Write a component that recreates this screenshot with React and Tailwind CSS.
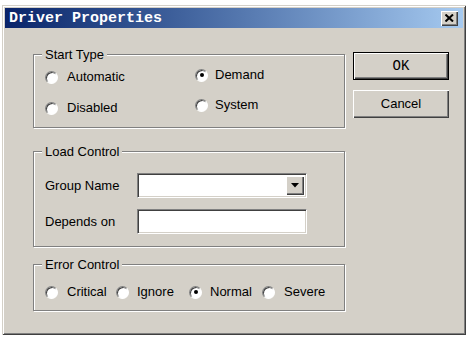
import React, { useState } from "react";

const face = "bg-[#d4d0c8]";

function Radio({ checked, label, onClick, textClass = "ml-[9px]" }) {
  return (
    <button type="button" onClick={onClick} className="flex items-center h-[16px] text-left">
      <span className="relative w-[13px] h-[13px] rounded-full bg-white border border-t-[#808080] border-l-[#808080] border-r-white border-b-white shadow-[inset_1px_1px_0_#404040] flex items-center justify-center">
        {checked && <span className="w-[4px] h-[4px] rounded-full bg-black" />}
      </span>
      <span className={textClass}>{label}</span>
    </button>
  );
}

function GroupBox({ title, className = "", children }) {
  return (
    <div className={`relative border border-[#808080] shadow-[1px_1px_0_#fff,inset_1px_1px_0_#fff] ${className}`}>
      <span className={`absolute left-[8px] -top-[8px] px-[3px] leading-[15px] ${face}`}>{title}</span>
      {children}
    </div>
  );
}

function Button({ children, isDefault }) {
  return (
    <button
      type="button"
      className={`w-[96px] h-[28px] ${face} flex items-center justify-center ${
        isDefault
          ? "border border-black shadow-[inset_1px_1px_0_#fff,inset_-1px_-1px_0_#404040,inset_-2px_-2px_0_#808080]"
          : "shadow-[inset_1px_1px_0_#fff,inset_-1px_-1px_0_#404040,inset_-2px_-2px_0_#808080]"
      }`}
    >
      {children}
    </button>
  );
}

const sunken =
  "bg-white border border-t-[#808080] border-l-[#808080] border-r-white border-b-white shadow-[inset_1px_1px_0_#404040,inset_-1px_-1px_0_#d4d0c8]";

export default function App() {
  const [startType, setStartType] = useState("Demand");
  const [errorCtl, setErrorCtl] = useState("Normal");

  return (
    <div className="w-[471px] h-[338px] bg-white pt-[5px] pl-[2px] font-['Liberation_Sans',Arial,sans-serif] text-[13px] text-black">
      <div className={`w-[464px] h-[330px] ${face} p-[3px] flex flex-col shadow-[inset_1px_1px_0_#d4d0c8,inset_-1px_-1px_0_#404040,inset_2px_2px_0_#fff,inset_-2px_-2px_0_#808080]`}>
        {/* title bar */}
        <div className="h-[20px] flex items-center bg-gradient-to-r from-[#0a246a] to-[#a6caf0]">
          <span className="ml-[4px] text-white font-bold text-[15px] font-['Liberation_Mono',monospace] leading-none">
            Driver Properties
          </span>
          <button
            type="button"
            className={`ml-auto mr-[5px] w-[17px] h-[15px] ${face} flex items-center justify-center shadow-[inset_1px_1px_0_#fff,inset_-1px_-1px_0_#404040,inset_-2px_-2px_0_#808080]`}
          >
            <svg width="9" height="8" viewBox="0 0 9 8">
              <path d="M0.5 0.5 L8 7.5 M8 0.5 L0.5 7.5" stroke="#000" strokeWidth="2" />
            </svg>
          </button>
        </div>

        {/* body */}
        <div className="flex pl-[28px] pt-[24px]">
          <div className="w-[312px] flex flex-col">
            <GroupBox title="Start Type" className="mt-[2px] h-[74px] flex pl-[11px]">
              <div className="w-[150px] flex flex-col pt-[14px] gap-[15px]">
                <Radio label="Automatic" checked={startType === "Automatic"} onClick={() => setStartType("Automatic")} />
                <Radio label="Disabled" checked={startType === "Disabled"} onClick={() => setStartType("Disabled")} />
              </div>
              <div className="flex flex-col pt-[12px] gap-[14px]">
                <Radio label="Demand" textClass="ml-[7px]" checked={startType === "Demand"} onClick={() => setStartType("Demand")} />
                <Radio label="System" textClass="ml-[7px]" checked={startType === "System"} onClick={() => setStartType("System")} />
              </div>
            </GroupBox>

            <GroupBox title="Load Control" className="mt-[23px] h-[96px] pl-[11px] pt-[21px]">
              <div className="flex items-center">
                <span className="w-[92px]">Group Name</span>
                <div className={`w-[170px] h-[25px] flex justify-end p-[2px] ${sunken}`}>
                  <div className={`w-[18px] h-full ${face} flex items-center justify-center shadow-[inset_1px_1px_0_#fff,inset_-1px_-1px_0_#404040,inset_-2px_-2px_0_#808080]`}>
                    <svg width="8" height="5" viewBox="0 0 8 5">
                      <path d="M0 0 H8 L4 4.5 Z" fill="#000" />
                    </svg>
                  </div>
                </div>
              </div>
              <div className="flex items-center mt-[11px]">
                <span className="w-[92px]">Depends on</span>
                <div className={`w-[170px] h-[25px] ${sunken}`} />
              </div>
            </GroupBox>

            <GroupBox title="Error Control" className="mt-[17px] h-[47px] pl-[11px] pt-[19px] flex">
              <div className="w-[71px]">
                <Radio label="Critical" checked={errorCtl === "Critical"} onClick={() => setErrorCtl("Critical")} />
              </div>
              <div className="w-[73px]">
                <Radio label="Ignore" textClass="ml-[8px]" checked={errorCtl === "Ignore"} onClick={() => setErrorCtl("Ignore")} />
              </div>
              <div className="w-[73px]">
                <Radio label="Normal" textClass="ml-[8px]" checked={errorCtl === "Normal"} onClick={() => setErrorCtl("Normal")} />
              </div>
              <div>
                <Radio label="Severe" textClass="ml-[9px]" checked={errorCtl === "Severe"} onClick={() => setErrorCtl("Severe")} />
              </div>
            </GroupBox>
          </div>

          <div className="ml-[8px] flex flex-col gap-[10px]">
            <Button isDefault>
              <span className="font-['Liberation_Mono',monospace] text-[14px]">OK</span>
            </Button>
            <Button>Cancel</Button>
          </div>
        </div>
      </div>
    </div>
  );
}
